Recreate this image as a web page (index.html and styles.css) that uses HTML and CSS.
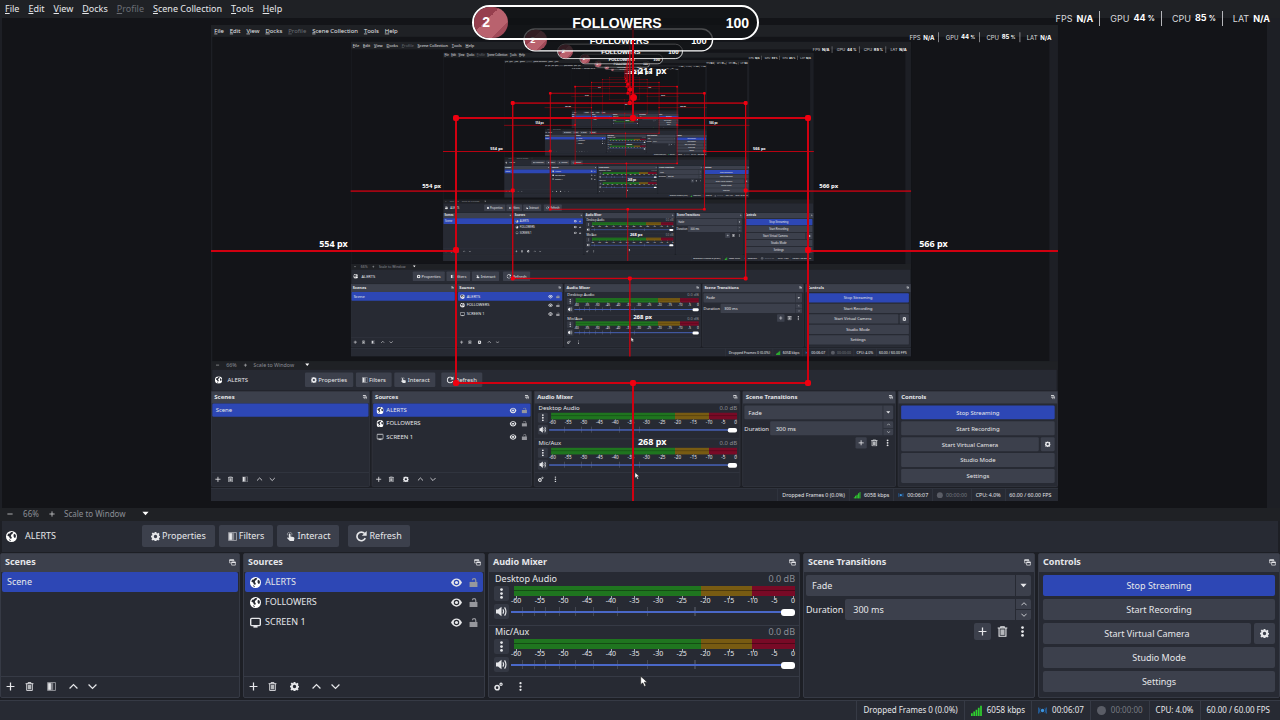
FILE: index.html
```
<!DOCTYPE html>
<html lang="en">
<head>
  <meta charset="UTF-8" />
  <meta name="viewport" content="width=device-width, initial-scale=1" />
  <title>OBS</title>
  <link rel="stylesheet" href="styles.css">
</head>
<body>
  <svg class="sprite" aria-hidden="true">
    <symbol id="gear" viewBox="0 0 16 16"><path fill="currentColor" fill-rule="evenodd" d="M6.500 0h3l.5 2.200 1.200.5 2-1.200 2 2-1.200 2 .5 1.100 2 .5v2.400l-2 .5-.5 1.200 1.200 2-2 2-2-1.200-1.200.5-.5 2h-3l-.5-2-1.200-.5-2 1.200-2-2 1.200-2L2 10 0 9.500V6.500L2 6l.5-1.200-1.200-2 2-2 2 1.200L6 2zM8 5a3 3 0 1 0 0 6 3 3 0 0 0 0-6z"/></symbol>
    <symbol id="globe" viewBox="0 0 16 16"><circle cx="8" cy="8" r="8" fill="#fff"/><path fill="#272a33" d="M7.500 1.500l3 .3-1 2.200-2 1.500-.5 2 1.500 1.500-1 2.500-2-1L4.500 8 2 7l1-3 2.500-.5zM11 5l2-1 1.500 3-.5 2.500-1.500.5L11 8zM4 11.500l2 1.200 1.500 2-2-.6z"/></symbol>
    <symbol id="trash" viewBox="0 0 16 16"><path fill="none" stroke="currentColor" stroke-width="1.600" d="M1 3h14M5.500 3V1h5v2M3 3v12h10V3"/><path fill="currentColor" opacity=".75" d="M5 5h6v8H5z"/></symbol>
    <symbol id="filter" viewBox="0 0 16 16"><path fill="none" stroke="currentColor" stroke-width="1.200" opacity=".8" d="M1 1h14v14H1z"/><path fill="currentColor" d="M2 2h5v12H2z"/><path fill="currentColor" opacity=".45" d="M7 2h4v12H7z"/></symbol>
    <symbol id="hand" viewBox="0 0 16 16"><path fill="currentColor" d="M5 4a1.500 1.500 0 0 1 3 0v4l5 1q2 .5 2 2l-1 5H7l-5-5 1-1.500 2 1z"/><path fill="none" stroke="currentColor" opacity=".6" stroke-width="1.400" d="M3 6a4 4 0 1 1 7 0"/></symbol>
    <symbol id="refresh" viewBox="0 0 16 16"><path fill="none" stroke="currentColor" stroke-width="2.400" d="M13.500 10.500A6.300 6.300 0 1 1 12.500 3.700"/><path fill="currentColor" d="M15.500 0v7H8.500z"/></symbol>
    <symbol id="pop" viewBox="0 0 16 16"><path fill="none" stroke="currentColor" stroke-width="1.600" d="M5 9H1.500V2H11v3M6 7h8.500v7H6z"/><path fill="currentColor" d="M1 1h10v3H1zM6 6h9v3H6z"/></symbol>
    <symbol id="plus" viewBox="0 0 16 16"><path fill="none" stroke="currentColor" stroke-width="2.200" d="M8 1v14M1 8h14"/></symbol>
    <symbol id="minus" viewBox="0 0 16 16"><path fill="none" stroke="currentColor" stroke-width="2.200" d="M1 8h14"/></symbol>
    <symbol id="up" viewBox="0 0 16 16"><path fill="none" stroke="currentColor" stroke-width="2.200" d="M1 11.500l7-7 7 7"/></symbol>
    <symbol id="down" viewBox="0 0 16 16"><path fill="none" stroke="currentColor" stroke-width="2.200" d="M1 4.500l7 7 7-7"/></symbol>
    <symbol id="caret" viewBox="0 0 16 16"><path fill="currentColor" d="M1 4h14l-7 8z"/></symbol>
    <symbol id="eye" viewBox="0 0 16 16"><path fill="currentColor" fill-rule="evenodd" d="M0 8q3-6 8-6T16 8q-3 6-8 6T0 8zM8 4a4 4 0 1 0 0 8 4 4 0 0 0 0-8z"/><circle cx="8" cy="8" r="2.300" fill="currentColor"/></symbol>
    <symbol id="lock" viewBox="0 0 16 16"><path fill="currentColor" d="M1 7h14v9H1z"/><path fill="none" stroke="currentColor" stroke-width="2" d="M12 8V4a3 3 0 0 0-6 0"/></symbol>
    <symbol id="monitor" viewBox="0 0 16 16"><rect x="1" y="2" width="14" height="10.500" rx="1.500" fill="none" stroke="currentColor" stroke-width="2"/><path fill="currentColor" d="M5 13h6v2.500H5z"/></symbol>
    <symbol id="dots" viewBox="0 0 16 16"><g fill="currentColor"><circle cx="8" cy="2.200" r="2"/><circle cx="8" cy="8" r="2"/><circle cx="8" cy="13.800" r="2"/></g></symbol>
    <symbol id="speaker" viewBox="0 0 16 16"><path fill="currentColor" d="M0 5h3L8 1v14L3 11H0z"/><path fill="none" stroke="currentColor" stroke-width="1.700" d="M10 5q2 3 0 6M12.500 2q4 6 0 12"/></symbol>
    <symbol id="gears" viewBox="0 0 16 16"><g fill="none" stroke="currentColor"><circle cx="5.500" cy="10" r="3.700" stroke-width="2.800"/><circle cx="12.500" cy="4" r="2" stroke-width="2"/></g></symbol>
    <symbol id="signal" viewBox="0 0 16 16"><path fill="#2fd02f" d="M0 12h2.500v4H0zM3.400 9.500h2.500V16H3.400zM6.700 7h2.500v9H6.700zM10 4h2.500v12H10zM13.300 1h2.500v15h-2.500z"/></symbol>
    <symbol id="live" viewBox="0 0 16 16"><circle cx="8" cy="8" r="3" fill="#3b94e0"/><path fill="none" stroke="#245f9c" stroke-width="1.800" d="M4 4q-3 4 0 8M12 4q3 4 0 8M1.500 2.500q-2 5.500 0 11M14.500 2.500q2 5.500 0 11"/></symbol>
    <symbol id="arrow" viewBox="0 0 12 18"><path fill="#fff" stroke="#222" d="M1 1v13l3-3 2.500 5.500 2.500-1L6.500 10H11z"/></symbol>
  </svg>

  <div class="window">
    <nav class="menu">
      <button><u>F</u>ile</button>
      <button><u>E</u>dit</button>
      <button><u>V</u>iew</button>
      <button><u>D</u>ocks</button>
      <button disabled><u>P</u>rofile</button>
      <button><u>S</u>cene Collection</button>
      <button><u>T</u>ools</button>
      <button><u>H</u>elp</button>
    </nav>

    <main class="preview">
      <div class="canvas">
        <div class="feed"></div>
        <div class="guide guide-left"><b>554 px</b></div>
        <div class="guide guide-right"><b>566 px</b></div>
        <div class="guide guide-top"><b>211 px</b></div>
        <div class="guide guide-bottom"><b>268 px</b></div>
        <div class="selection">
          <i class="nw"></i><i class="n"></i><i class="ne"></i><i class="w"></i>
          <i class="e"></i><i class="sw"></i><i class="s"></i><i class="se"></i>
          <i class="rotate"></i>
        </div>
      </div>
    </main>

    <div class="zoombar">
      <button aria-label="Zoom out"><svg class="icon-xs"><use href="#minus"/></svg></button>
      <span class="percent">66%</span>
      <button aria-label="Zoom in"><svg class="icon-xs"><use href="#plus"/></svg></button>
      <div class="scale">
        <select aria-label="Preview scaling"><option>Scale to Window</option></select>
        <svg class="icon-sm"><use href="#caret"/></svg>
      </div>
    </div>

    <div class="sourcebar">
      <svg class="icon-lg"><use href="#globe"/></svg>
      <span class="source-name">ALERTS</span>
      <button class="btn"><svg class="icon"><use href="#gear"/></svg>Properties</button>
      <button class="btn"><svg class="icon"><use href="#filter"/></svg>Filters</button>
      <button class="btn"><svg class="icon"><use href="#hand"/></svg>Interact</button>
      <button class="btn btn-refresh"><svg class="icon-lg"><use href="#refresh"/></svg>Refresh</button>
    </div>

    <div class="docks">
      <section class="dock">
        <header><h2>Scenes</h2><button aria-label="Float"><svg class="icon-sm"><use href="#pop"/></svg></button></header>
        <ul class="list">
          <li class="selected"><span class="item-name">Scene</span></li>
        </ul>
        <footer>
          <button aria-label="Add"><svg class="icon"><use href="#plus"/></svg></button>
          <button aria-label="Remove"><svg class="icon"><use href="#trash"/></svg></button>
          <button aria-label="Filters" class="spaced"><svg class="icon"><use href="#filter"/></svg></button>
          <button aria-label="Move up" class="spaced"><svg class="icon"><use href="#up"/></svg></button>
          <button aria-label="Move down"><svg class="icon"><use href="#down"/></svg></button>
        </footer>
      </section>

      <section class="dock">
        <header><h2>Sources</h2><button aria-label="Float"><svg class="icon-sm"><use href="#pop"/></svg></button></header>
        <ul class="list">
          <li class="selected"><svg class="icon-lg"><use href="#globe"/></svg><span class="item-name">ALERTS</span>
            <button aria-label="Visible"><svg class="icon-lg"><use href="#eye"/></svg></button><button aria-label="Lock" class="lock"><svg class="icon"><use href="#lock"/></svg></button></li>
          <li><svg class="icon-lg"><use href="#globe"/></svg><span class="item-name">FOLLOWERS</span>
            <button aria-label="Visible"><svg class="icon-lg"><use href="#eye"/></svg></button><button aria-label="Lock" class="lock"><svg class="icon"><use href="#lock"/></svg></button></li>
          <li><svg class="icon-lg"><use href="#monitor"/></svg><span class="item-name">SCREEN 1</span>
            <button aria-label="Visible"><svg class="icon-lg"><use href="#eye"/></svg></button><button aria-label="Lock" class="lock"><svg class="icon"><use href="#lock"/></svg></button></li>
        </ul>
        <footer>
          <button aria-label="Add"><svg class="icon"><use href="#plus"/></svg></button>
          <button aria-label="Remove"><svg class="icon"><use href="#trash"/></svg></button>
          <button aria-label="Properties" class="spaced"><svg class="icon"><use href="#gear"/></svg></button>
          <button aria-label="Move up" class="spaced"><svg class="icon"><use href="#up"/></svg></button>
          <button aria-label="Move down"><svg class="icon"><use href="#down"/></svg></button>
        </footer>
      </section>

      <section class="dock">
        <header><h2>Audio Mixer</h2><button aria-label="Float"><svg class="icon-sm"><use href="#pop"/></svg></button></header>
        <div class="mixer">
          <div class="channel">
            <div class="channel-head"><span>Desktop Audio</span><span class="db">0.0 dB</span></div>
            <div class="channel-body">
              <div class="channel-buttons">
                <button aria-label="Options"><svg class="icon-lg"><use href="#dots"/></svg></button>
                <button aria-label="Mute"><svg class="icon-lg"><use href="#speaker"/></svg></button>
              </div>
              <div class="levels">
                <div class="meter"></div>
                <div class="ticks"><span>-60</span><span>-55</span><span>-50</span><span>-45</span><span>-40</span><span>-35</span><span>-30</span><span>-25</span><span>-20</span><span>-15</span><span>-10</span><span>-5</span><span>0</span></div>
                <input type="range" min="0" max="100" value="100" aria-label="Desktop Audio volume">
              </div>
            </div>
          </div>
          <div class="channel">
            <div class="channel-head"><span>Mic/Aux</span><span class="db">0.0 dB</span></div>
            <div class="channel-body">
              <div class="channel-buttons">
                <button aria-label="Options"><svg class="icon-lg"><use href="#dots"/></svg></button>
                <button aria-label="Mute"><svg class="icon-lg"><use href="#speaker"/></svg></button>
              </div>
              <div class="levels">
                <div class="meter"></div>
                <div class="ticks"><span>-60</span><span>-55</span><span>-50</span><span>-45</span><span>-40</span><span>-35</span><span>-30</span><span>-25</span><span>-20</span><span>-15</span><span>-10</span><span>-5</span><span>0</span></div>
                <input type="range" min="0" max="100" value="100" aria-label="Mic/Aux volume">
              </div>
            </div>
          </div>
        </div>
        <footer>
          <button aria-label="Advanced audio"><svg class="icon"><use href="#gears"/></svg></button>
          <button aria-label="Menu" class="spaced"><svg class="icon"><use href="#dots"/></svg></button>
        </footer>
      </section>

      <section class="dock">
        <header><h2>Scene Transitions</h2><button aria-label="Float"><svg class="icon-sm"><use href="#pop"/></svg></button></header>
        <div class="transitions">
          <div class="combo">
            <select aria-label="Transition"><option>Fade</option></select>
            <svg class="icon-sm"><use href="#caret"/></svg>
          </div>
          <label class="duration">Duration
            <span class="spin">
              <input type="text" value="300 ms">
              <span class="steppers">
                <button aria-label="Increase"><svg class="icon-xs"><use href="#up"/></svg></button>
                <button aria-label="Decrease"><svg class="icon-xs"><use href="#down"/></svg></button>
              </span>
            </span>
          </label>
          <div class="transition-tools">
            <button class="filled" aria-label="Add"><svg class="icon"><use href="#plus"/></svg></button>
            <button aria-label="Remove"><svg class="icon-lg"><use href="#trash"/></svg></button>
            <button aria-label="Menu"><svg class="icon-lg"><use href="#dots"/></svg></button>
          </div>
        </div>
      </section>

      <section class="dock">
        <header><h2>Controls</h2><button aria-label="Float"><svg class="icon-sm"><use href="#pop"/></svg></button></header>
        <div class="controls">
          <button class="btn btn-live">Stop Streaming</button>
          <button class="btn">Start Recording</button>
          <div class="camera">
            <button class="btn">Start Virtual Camera</button>
            <button class="btn btn-gear" aria-label="Virtual camera settings"><svg class="icon"><use href="#gear"/></svg></button>
          </div>
          <button class="btn">Studio Mode</button>
          <button class="btn">Settings</button>
        </div>
      </section>
    </div>

    <div class="status">
      <span>Dropped Frames 0 (0.0%)</span>
      <span><svg class="icon-lg"><use href="#signal"/></svg>6058 kbps</span>
      <span><svg class="icon"><use href="#live"/></svg>00:06:07</span>
      <span class="idle"><i class="rec"></i>00:00:00</span>
      <span>CPU: 4.0%</span>
      <span>60.00 / 60.00 FPS</span>
    </div>

    <div class="goal"><span class="goal-count">2</span><span>FOLLOWERS</span><span>100</span></div>
    <div class="perf">
      <span>FPS <b>N/A</b></span>
      <span>GPU <b>44 <small>%</small></b></span>
      <span>CPU <b>85 <small>%</small></b></span>
      <span>LAT <b>N/A</b></span>
    </div>
    <svg class="cursor"><use href="#arrow"/></svg>
  </div>

  <script src="script.js"></script>
</body>
</html>
```
FILE: styles.css
```
:root {
  --bg: #1d1f25;
  --panel: #272a33;
  --control: #3c404c;
  --accent: #2d47b5;
  --text: #e6e7ea;
  --muted: #8b8e96;
  --red: #d00010;
  --scale: 0.6617;
}
* { box-sizing: border-box; }
body { margin: 0; background: var(--bg); overflow: hidden; }
button, input, select { font: inherit; color: inherit; border: 0; padding: 0; margin: 0; background: none; border-radius: 0; appearance: none; }
button { display: flex; align-items: center; justify-content: center; }
h2, ul { margin: 0; padding: 0; }
svg { display: block; flex: none; }
.sprite { position: absolute; width: 0; height: 0; }
.icon-xs { width: 6px; height: 6px; }
.icon-sm { width: 7px; height: 7px; }
.icon { width: 9px; height: 9px; }
.icon-lg { width: 11px; height: 11px; }

.window {
  position: relative;
  display: flex;
  flex-direction: column;
  width: 100vw;
  height: 100vh;
  overflow: hidden;
  background: var(--bg);
  color: var(--text);
  font: 9px/12px "Noto Sans", "Open Sans", sans-serif;
}

/* menu */
.menu { display: flex; gap: 9px; height: 18px; padding: 0 5px; background: #1f2125; flex: none; }
.menu button:disabled { color: #6b6e75; }
.menu u { text-underline-offset: 1px; }

/* preview, each level shows the whole window again */
.preview {
  flex: 1;
  min-height: 0;
  display: flex;
  align-items: center;
  justify-content: center;
  margin: 0 13px 0 2px;
  background: #131418;
  overflow: hidden;
}
.canvas { position: relative; flex: none; width: calc(100vw * var(--scale)); height: calc(100vh * var(--scale)); }
.feed { position: absolute; inset: 0; overflow: hidden; background: #131418; }
.feed > .window { transform: scale(var(--scale)); transform-origin: 0 0; }
.guide { position: absolute; background: var(--red); }
.guide b { position: absolute; white-space: nowrap; color: #fff; font-size: 9px; }
.guide-left { left: 0; width: 28.9%; top: 47.2%; height: 2px; }
.guide-right { left: 70.6%; right: 0; top: 47.2%; height: 2px; }
.guide-top { top: 0; height: 19.6%; left: 49.7%; width: 2px; }
.guide-bottom { top: 75.2%; bottom: 0; left: 49.7%; width: 2px; }
.guide-left b, .guide-right b { left: 50%; bottom: 2px; transform: translateX(-50%); }
.guide-top b, .guide-bottom b { top: 50%; left: 6px; transform: translateY(-50%); }
.selection { position: absolute; left: 28.8%; top: 19.4%; width: 41.8%; height: 56%; border: 2px solid var(--red); }
.selection i { position: absolute; width: 6px; height: 6px; margin: -4px; border-radius: 2px; background: #f00010; }
.selection .nw { left: 0; top: 0; }
.selection .n { left: 50%; top: 0; }
.selection .ne { right: 0; top: 0; }
.selection .w { left: 0; top: 50%; }
.selection .e { right: 0; top: 50%; }
.selection .sw { left: 0; bottom: 0; }
.selection .s { left: 50%; bottom: 0; }
.selection .se { right: 0; bottom: 0; }
.selection .rotate { left: 50%; top: -21px; width: 7px; height: 7px; border-radius: 50%; }
.selection .n, .selection .s, .selection .rotate { margin-left: -2px; }

.zoombar { display: flex; align-items: center; height: 13px; padding: 0 0 2px 6px; background: #1f2125; font-size: 8px; color: var(--muted); flex: none; }
.zoombar button { width: 8px; color: #c8c9cc; }
.percent { width: 34px; text-align: center; }
.scale { position: relative; display: flex; align-items: center; margin-left: 8px; width: 86px; }
.scale select { width: 100%; }
.scale svg { position: absolute; right: 1px; color: #fff; pointer-events: none; }

.sourcebar { display: flex; align-items: center; gap: 4px; height: 31px; margin: 0 2px; padding: 0 0 1px 4px; background: var(--panel); flex: none; }
.source-name { width: 117px; padding-left: 4px; }
.btn { gap: 2px; height: 22px; padding: 0 9px; border-radius: 2px; background: var(--control); }
.btn-refresh { margin-left: 5px; padding: 0 8px; }

/* docks */
.docks {
  display: grid;
  grid-template-columns: 240fr 242fr 312fr 232fr 242fr;
  gap: 3px;
  margin-top: 1px;
  flex: none;
}
.dock { display: flex; flex-direction: column; min-width: 0; height: 145px; background: var(--panel); border: 1px solid #363a45; border-radius: 2px; }
.dock header { display: flex; align-items: center; justify-content: space-between; height: 18px; padding: 0 3px 2px 4px; background: var(--control); flex: none; }
.dock h2 { font-size: 9px; font-weight: bold; }
.dock footer { display: flex; align-items: center; gap: 10px; height: 21px; padding: 0 5px 1px; border-top: 1px solid #363a45; flex: none; }
.dock footer .spaced { margin-left: 3px; }
.list { flex: 1; list-style: none; padding: 0 1px; }
.list li { display: flex; align-items: center; gap: 4px; height: 20px; padding: 0 5px; border-radius: 2px; }
.list .selected { background: var(--accent); }
.item-name { flex: 1; }
.lock { margin-left: 3px; color: #96979d; }

.mixer { flex: 1; }
.channel { height: 53px; padding: 1px 4px 0 5px; }
.channel + .channel { height: 51px; padding-top: 0; border-top: 1px solid #363a45; }
.channel-head { display: flex; justify-content: space-between; padding-left: 1px; }
.db { color: var(--muted); }
.channel-body { display: flex; gap: 2px; margin-top: 1px; }
.channel-buttons { display: flex; flex-direction: column; gap: 3px; }
.channel-buttons button { width: 15px; height: 15px; border-radius: 2px; background: #343843; }
.levels { flex: 1; min-width: 0; }
.meter {
  height: 10px;
  margin-left: 3px;
  background:
    linear-gradient(rgba(0, 0, 0, .35), rgba(0, 0, 0, .35)) 0 4px / 100% 1px no-repeat,
    linear-gradient(90deg, #1f751f 66.7%, #785b12 66.7% 84.8%, #780a26 84.8%);
}
.ticks { display: flex; justify-content: space-between; font-size: 7px; line-height: 9px; }
.ticks span { position: relative; }
.ticks span::before { content: ""; position: absolute; left: 50%; top: 0; width: 1px; height: 3px; background: #a5a7ac; }
.levels input {
  display: block;
  width: 100%;
  height: 9px;
  margin-top: 2px;
  background:
    linear-gradient(#4a68c8, #4a68c8) 0 4px / 100% 2px no-repeat,
    linear-gradient(90deg, transparent 4%, #434752 4% 4.4%, transparent 4.4% 8%, #434752 8% 8.4%, transparent 8.4% 12%, #434752 12% 12.4%, transparent 12.4% 17%, #434752 17% 17.4%, transparent 17.4% 22.5%, #434752 22.5% 22.9%, transparent 22.9% 29%, #434752 29% 29.4%, transparent 29.4% 37.3%, #434752 37.3% 37.7%, transparent 37.7% 48%, #434752 48% 48.4%, transparent 48.4% 64.6%, #434752 64.6% 65%, transparent 65%);
}
.levels input::-webkit-slider-thumb { appearance: none; width: 14px; height: 7px; border-radius: 3px; background: #fff; margin-top: 1px; }

.transitions { display: flex; flex-direction: column; gap: 3px; padding: 3px 3px 0 2px; }
.combo { position: relative; display: flex; align-items: center; height: 21px; background: var(--control); border-radius: 2px; }
.combo select { width: 100%; height: 100%; padding-left: 6px; }
.combo svg { position: absolute; right: 4px; pointer-events: none; }
.combo::after { content: ""; position: absolute; right: 15px; top: 0; bottom: 0; border-left: 1px solid var(--panel); }
.duration { display: flex; align-items: center; gap: 2px; height: 21px; }
.spin { flex: 1; display: flex; height: 21px; background: var(--control); border-radius: 2px; }
.spin input { flex: 1; min-width: 0; padding-left: 8px; }
.steppers { display: flex; flex-direction: column; width: 16px; border-left: 1px solid var(--panel); }
.steppers button { flex: 1; }
.steppers button + button { border-top: 1px solid var(--panel); }
.transition-tools { display: flex; justify-content: flex-end; gap: 3px; }
.transition-tools button { width: 17px; height: 17px; border-radius: 2px; }
.transition-tools .filled { background: var(--control); }

.controls { display: flex; flex-direction: column; gap: 3px; padding: 3px 4px 0; }
.controls .btn { height: 21px; }
.controls .btn-live { background: var(--accent); }
.camera { display: flex; gap: 3px; }
.camera .btn { flex: 1; }
.camera .btn-gear { flex: none; width: 21px; padding: 0; }

.status { display: flex; justify-content: flex-end; height: 20px; margin-top: 2px; padding-right: 4px; background: var(--panel); border-top: 1px solid #363a45; font-size: 8px; flex: none; }
.status span { display: flex; align-items: center; gap: 5px; padding: 0 6px 1px; border-left: 1px solid #363a45; white-space: nowrap; }
.status .idle { color: #777a82; }
.rec { width: 9px; height: 9px; border-radius: 50%; background: #5a5d66; }

/* stream overlays */
.goal {
  position: absolute;
  left: 36.9%;
  top: 5px;
  width: 22.4%;
  height: 35px;
  display: flex;
  align-items: center;
  justify-content: space-between;
  padding-right: 8px;
  border: 2px solid #fff;
  border-radius: 18px;
  background: rgba(16, 17, 20, .75);
  color: #fff;
  font: bold 14px/18px "Liberation Sans", Arial, sans-serif;
}
.goal-count { width: 34px; line-height: 31px; padding-left: 8px; border-radius: 16px; background: linear-gradient(135deg, #963f4e 40%, #b9626e 40% 75%, #a14b59 75%); }
.perf { position: absolute; right: 10px; top: 11px; display: flex; gap: 6px; color: #d8d9dc; font: 9px/14px Inter, sans-serif; }
.perf span { display: flex; gap: 4px; align-items: center; }
.perf span + span { padding-left: 10px; border-left: 1px solid #b5b6ba; }
.perf b { color: #fff; }
.perf small { font-size: 7px; }
.cursor { position: absolute; left: 50%; top: 93.8%; width: 8px; height: 13px; }
```
FILE: script.js
```
const LEVELS = 6;
const blank = document.querySelector('.window').cloneNode(true);
let current = document.querySelector('.window');

// the captured screen contains the preview, so the window repeats inside itself
for (let i = 0; i < LEVELS; i++) {
  const copy = blank.cloneNode(true);
  copy.inert = true;
  copy.setAttribute('aria-hidden', 'true');
  current.querySelector('.feed').appendChild(copy);
  current = copy;
}
```
